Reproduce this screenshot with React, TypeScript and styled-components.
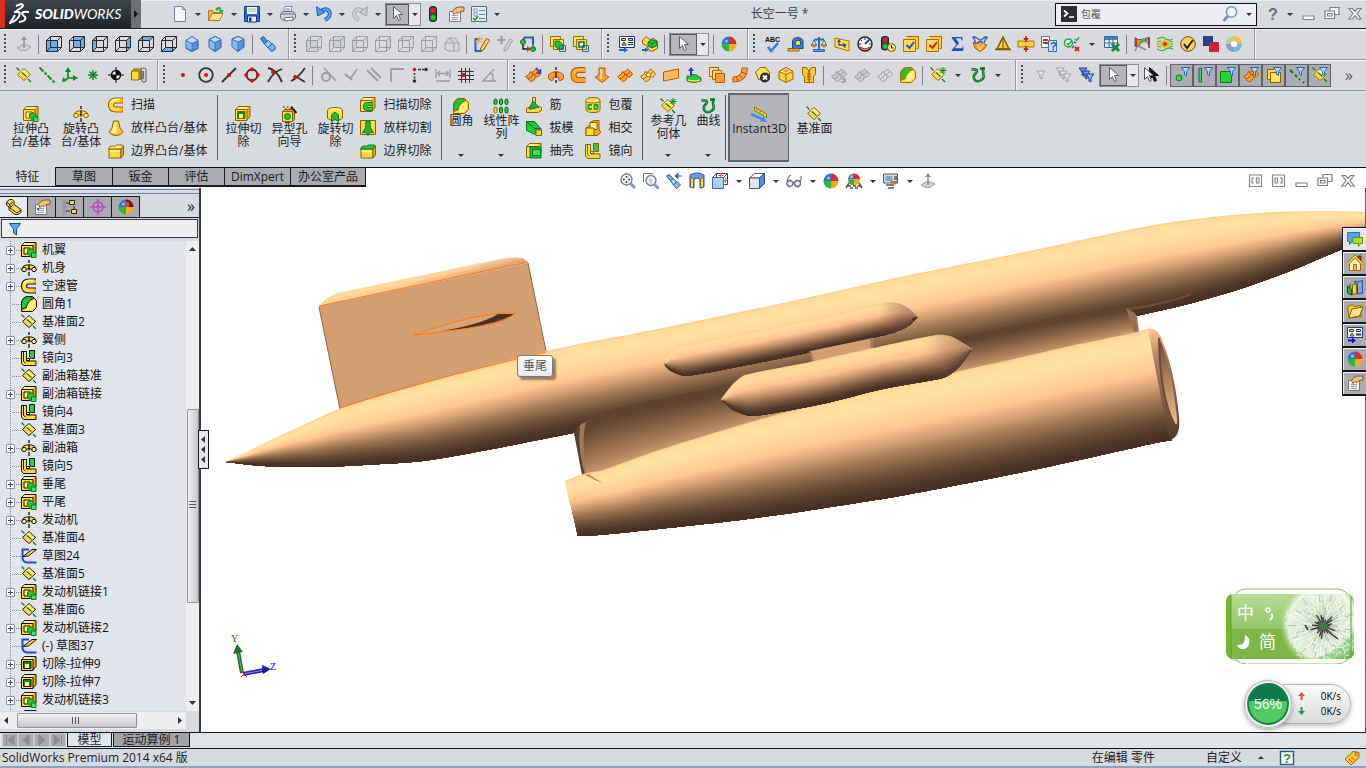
import React from 'react';
import styled, { createGlobalStyle } from 'styled-components';

/* ---------- drawing helpers ---------- */

type Shape = [d: string, fill: string, stroke?: string, width?: number];
type Label = { text: string; x: number; y: number; size: number; fill: string; serif?: boolean };
type Part = Shape | Label;

const circle = (x: number, y: number, r: number) =>
  `M${x - r} ${y}a${r} ${r} 0 1 0 ${2 * r} 0a${r} ${r} 0 1 0 ${-2 * r} 0`;
const box = (x: number, y: number, w: number, h: number) => `M${x} ${y}h${w}v${h}h${-w}z`;

const N = 'none';
const C = 'currentColor';
const YEL = '#ffdc3c';
const LITE = '#fff08a';
const GOLD = '#e8ae10';
const GREEN = '#1fc437';
const DARKGREEN = '#0b7a1c';
const ORANGE = '#ff9f2e';
const RUST = '#b35900';
const BLUE = '#2163c4';
const GREY = '#9a9ca0';

const cubeWire = (stroke: string): Part[] => [
  [box(0.5, 4.5, 11, 11), N, stroke],
  ['M0.5 4.5l4-4h11v11l-4 4M4.5 .5v11h11M0.5 15.5l4-4M11.5 4.5l4-4', N, stroke],
];
const faces: Record<string, string> = {
  front: 'M0 4h12v12h-12z',
  back: 'M4 0h12v12h-12z',
  left: 'M.5 4.5l4-4v11l-4 4z',
  right: 'M11.5 4.5l4-4v11l-4 4z',
  top: 'M.5 4.5l4-4h11l-4 4z',
  bottom: 'M.5 15.5l4-4h11l-4 4z',
};
const cube = (face: string): Part[] => [[faces[face], '#6eaeea'], ...cubeWire('#26282c')];
const greyCube = (face: string): Part[] => [[faces[face], '#cccfd3'], ...cubeWire(GREY)];
const isoCube = (t: number): Part[] => [
  [`M8 .5l6 ${t}v8l-6 ${15 - t - 8}l-6-${15 - t - 8}v-8z`, '#5b93da', '#2c5ca6'],
  [`M8 .5l6 ${t}l-6 3l-6-3z`, '#c2defa', '#3c6cb6'],
  [`M8 ${t + 3.5}v${11.5 - t}`, N, '#3c6cb6'],
  [`M2.5 ${t + 1.5}l5 2.5v${10 - t}l-5-2.5z`, '#86b7ee'],
];
const funnelAt = (x: number, y: number, fill: string, stroke: string): Part[] => [
  [`M${x} ${y}h8l-3 4v4l-2-1v-3z`, fill, stroke],
];
const smallFunnel = funnelAt(7.5, 0.5, '#b8dcfb', BLUE);
const planeOf = (edge: string): Part[] => [
  ['M8 1.500l6.500 6l-6.500 6l-6.500-6z', YEL, edge],
  ['M8 2.500l5 5l-2 2l-6-5z', LITE],
  ['M6 5.500l4.500 4', N, DARKGREEN, 1.200],
  ['M.5 .5l3 3M12 12l3 3', N, DARKGREEN, 1.300],
];
const plane = planeOf(C);
const pencil: Part[] = [
  ['M5.5 12l6-9.5l2.5 1.5l-6 9.5l-2.5 1z', '#ffd24a', '#8a5a10'],
  ['M11.5 2.5l2.5 1.5', N, '#c33', 2],
];
const ball = (r: number, y = 8): Part[] => [
  [`M8 ${y}L8 ${y - r}A${r} ${r} 0 0 0 ${8 - r} ${y}z`, '#2c74e0'],
  [`M8 ${y}L8 ${y - r}A${r} ${r} 0 0 1 ${8 + r} ${y}z`, '#dd2c22'],
  [`M8 ${y}L8 ${y + r}A${r} ${r} 0 0 0 ${8 + r} ${y}z`, '#f0ae28'],
  [`M8 ${y}L8 ${y + r}A${r} ${r} 0 0 1 ${8 - r} ${y}z`, '#2fb43c'],
  [circle(5.5, y - 3, 1.6), 'rgba(255,255,255,.55)'],
];
const arrowCursor = (dx: number, fill: string, stroke: string): Part[] => [
  [`M${3.5 + dx} .5v12l3-3l2 5l2-1l-2-5h4z`, fill, stroke],
];
const block: Part[] = [
  ['M.5 3.5l3-3h11.5v10l-3 3.5h-11.5z', GOLD, C],
  [box(0.5, 3.5, 11.5, 11), YEL, C],
  ['M1.500 3l2-2h10l-2 2z', LITE],
];
const openBlock: Part[] = [
  ['M1 6h12v9h-12z', YEL, C],
  ['M2 7h10v2h-10z', LITE],
  ['M13 6l2.5-3v9l-2.5 3z', GOLD, C],
];
const tube = (fill: string, stroke: string): Part[] => [
  ['M14.5 3h-7q-5 0-5 5t5 5h7', N, stroke, 6],
  ['M14 3h-6.500q-5 0-5 5t5 5h6.500', N, fill, 4],
  ['M13 2.500h-6q-4 1-4 4', N, '#ffe0a0', 1],
];
const check = (stroke: string): Part[] => [
  ['M3.500 .5h12v12h-2', '#ffc93c', '#a86e00'],
  [box(0.5, 3.5, 12, 12), '#ffd75a', '#a86e00'],
  ['M3.5 9l3 3l4.500-6', N, stroke, 2],
];
const sheetHand: Part[] = [
  [box(1.5, 5.5, 11, 10), '#f6f6f6', '#777'],
  ['M4 9.500h6M4 11.500h6M4 13.500h6', N, '#99a'],
  ['M4.500 5.500q2-4 6-4.500l5.500 0v4l-4 .500l-2 2l-2-1l-2 2z', '#f2be82', '#8a5522'],
];
const quilt = (fill: string, edge: string): Part[] => [
  ['M.500 9.500q4-1 5-5q2 2 5-2.500l5 4.500q-2 5-5 3q-1 5-5 5z', fill, edge],
  ['M3 12q4-1 5-5q2 2 5-2.500M5.500 4.500l5 5', N, edge],
];

const icons: Record<string, Part[]> = {
  newFile: [
    ['M2.5 .5h8l3 3v12h-11z', '#f2f8fc', '#6d8799'],
    ['M10.5 .5v3h3', '#cfe0ec', '#6d8799'],
  ],
  open: [
    ['M.5 4.5h4l1 2h6v8h-11z', '#f0b93a', '#b37a10'],
    ['M.5 14.5l3.500-7h11l-3.500 7z', '#ffe68c', '#b37a10'],
    ['M8 4q2-3 5-1', N, '#2fa83a', 2.500],
    ['M10.500 4h5.500l-2.500 4z', '#2fa83a'],
  ],
  save: [
    [box(0.5, 0.5, 15, 15), '#2c66d0', '#12398c'],
    [box(3, 1, 10, 7), '#fff'],
    ['M4 3h8M4 5h8', N, '#9ab'],
    [box(3.5, 10, 9, 6), '#e6ebf2', '#12398c'],
    [box(5, 11.500, 2.500, 4), '#12398c'],
  ],
  print: [
    ['M3 7l2-6.500h7l-1.500 6z', '#fff', '#889'],
    ['M5.500 3h4.500M5 5h4.500', N, '#58b'],
    ['M.5 8l3-2.500h9l3 2.500v4l-3 2.500h-9l-3-2.500z', '#cfd4dc', '#6b7280'],
    ['M1 8h14M4 12l9-1v3l-8 1z', '#fff', '#6b7280'],
  ],
  undo: [
    ['M4 6q5-5 9-1q3 5-4 9', N, '#1c5fb8', 4],
    ['M4 6q5-5 9-1q3 5-4 9', N, '#5da7f0', 2],
    ['M.5 .5l1 9.500l7-3.500z', '#4c99ea', '#1c5fb8'],
  ],
  redo: [
    ['M12 6q-5-5-9-1q-3 5 4 9', N, '#a3a6ab', 4],
    ['M12 6q-5-5-9-1q-3 5 4 9', N, '#d0d3d7', 2],
    ['M15.500 .5l-1 9.500l-7-3.500z', '#c8cbcf', '#a3a6ab'],
  ],
  select: arrowCursor(0, '#fff', '#5a5c60'),
  traffic: [
    ['M4.500 2.500q0-2 3.500-2t3.500 2v11q0 2-3.500 2t-3.500-2z', '#444', '#222'],
    [circle(8, 4.5, 2.500), '#e8231a'],
    [circle(8, 11.5, 2.500), '#1fd02e'],
  ],
  properties: sheetHand,
  options: [
    [box(0.5, 0.5, 15, 15), '#e3edf4', '#4e6a86'],
    [box(3, 3, 3, 3), '#fff', '#8098b0'],
    ['M8 4.500h6M8 8.500h6M8 12.500h6', N, '#6e86a0', 1],
    [box(3, 7, 3, 3), '#fff', '#8098b0'],
    ['M2 12l2 2l3-4', N, '#1a9a28', 1.500],
  ],
  normalTo: [
    ['M1 12l5-3h5l4 2l-5 3.500h-5z', '#cfd1d5', '#a0a2a6'],
    ['M8 12v-9', N, '#8a8c90', 1.500],
    ['M5 4l3-4l3 4z', '#8a8c90'],
  ],
  front: cube('front'),
  back: cube('back'),
  left: cube('left'),
  right: cube('right'),
  top: cube('top'),
  bottom: cube('bottom'),
  isometric: isoCube(4),
  trimetric: isoCube(3),
  dimetric: isoCube(2.500),
  telescope: [
    ['M.500 2.500l3-2l4 5l-3 2.500z', '#3e8be0', '#1b55a5'],
    ['M4.500 7.500l4-3l3.500 4l-4 3.500z', '#a4d0f6', '#1b55a5'],
    ['M8 11.500l4.500-4l3 4q0 3-4 4z', '#7ab8f2', '#1b55a5'],
  ],
  gFront: greyCube('front'),
  gBack: greyCube('back'),
  gLeft: greyCube('left'),
  gRight: greyCube('right'),
  gTop: greyCube('top'),
  gBottom: greyCube('bottom'),
  gIso: [
    ['M1 7l4-5h6l4 5v8h-10l-4-2z', '#d4d6da', GREY],
    ['M1 7h9l5 0M10 7v8M5 2l5 5', N, GREY],
  ],
  sketch: [
    ['M1.500 15v-12h4M1 15h7', N, BLUE, 2],
    ['M1 5.500l8-3M5 .5v7M2 1.500l6 5M8 1.500l-6 5', N, '#f5a030', 1],
    ['M6.500 12.500l6-10l3 1.500l-6 10l-3 1z', '#ffd24a', '#8a5a10'],
  ],
  sketch3d: [
    ['M4.500 0v8M.5 4h8', N, GREY, 2],
    ['M7 13l6-10l2.500 1.500l-6 10l-2.500 .5z', '#d2d4d8', GREY],
  ],
  sketchStep: [
    ['M4 1.500h9v8M4 1.500v3', N, BLUE, 2],
    [circle(3, 6, 2.500), GREEN, DARKGREEN],
    ['M3 9v4h5', N, '#222', 1.500],
    ['M7 10l4 3l-4 3z', '#e0261c'],
    [circle(13, 13, 2.500), GREEN, DARKGREEN],
  ],
  copyBody: [
    [box(0.5, 0.5, 10, 10), '#ffe15a', '#967000'],
    [box(3.5, 3.5, 10, 10), '#ffd94a', '#967000'],
    ['M5 5l4 0l4 4v4h-5l-3-3z', GREEN, DARKGREEN],
    [box(9.5, 9.5, 6, 6), N, BLUE],
  ],
  copySketch: [
    [box(0.5, 0.5, 10, 10), '#ffe15a', '#967000'],
    [box(3.5, 3.5, 10, 10), '#ffd94a', '#967000'],
    [box(6, 6, 5, 5), '#fff', DARKGREEN, 1.500],
    [box(9.5, 9.5, 6, 6), N, BLUE],
  ],
  blocks: [
    [box(0.5, 0.5, 15, 11), '#f4f6fa', '#1c3c8c'],
    [box(2.5, 2.5, 4, 2), YEL, '#334'],
    [box(9.5, 2.5, 4, 2), '#bcd', '#334'],
    ['M3 9l2-3l2 3z', YEL, '#334'],
    ['M9 6.500h5M9 8.500h5', N, '#334'],
    ['M0 14h6', N, BLUE, 2],
    ['M5 11.500l4 2.500l-4 2.500z', BLUE],
  ],
  blockYellow: [
    ['M.500 4l4-3.500l3 3l4-1l4 3v7l-6 3l-3-2l-2-4l-4-2z', YEL, '#8a6000'],
    ['M6 6l4-2.500l5 2v4l-5 2.500l-4-2z', GREEN, DARKGREEN],
    ['M6 6l4 2v4M10 8l5-3', N, DARKGREEN],
    ['M0 14h4', N, BLUE, 2],
    ['M3 11.500l4 2.500l-4 2z', BLUE],
  ],
  appearance: ball(7.500),
  spell: [
    { text: 'ABC', x: 0, y: 6, size: 7, fill: '#111' },
    ['M3 11l3 4l7-8', N, '#3b78d8', 2.500],
  ],
  measure: [
    ['M4.500 4.500q1-3 5-3t5.500 3v8h-10.500z', '#3a7bd4', '#173f86'],
    [circle(10, 7, 2.800), '#ffe05a', '#173f86'],
    ['M0 12.500h11v2.500h-11z', '#ffd42a', '#8a6000'],
    ['M2 12v2M5 12v2M8 12v2', N, '#8a6000'],
  ],
  mass: [
    ['M8 1v13M3 3.500h10', N, '#2b69b6', 2],
    ['M.5 9l2.500-5l2.500 5zM10.500 9l2.500-5l2.500 5z', '#fff2b0', '#2b69b6'],
    ['M0 9h6q-3 4-6 0zM10 9h6q-3 4-6 0z', '#ffc21a', '#a06c00'],
    [box(2.5, 13.5, 11, 2), '#5c9be6', '#2b69b6'],
  ],
  section: [
    ['M1 2l14 3v10l-14-4z', '#ffdc50', '#a87800'],
    ['M5 5v4h6v3', N, '#1d4fb5', 1.300],
    ['M3 6l2-3l2 3zM9 7l4 2l-4 2z', '#1d4fb5'],
  ],
  gauge: [
    [circle(8, 8, 7), '#f6f6f6', '#26282c', 1.500],
    ['M8 8l5-5', N, '#1d4fb5', 2],
    ['M8 2v2M2 8h2M12 8h2M4 4l1 1', N, '#26282c'],
    ['M3 11q5 4 10 0', N, '#e03020', 1.500],
  ],
  trafficClock: [
    ['M1.500 2q0-1.500 3.500-1.500t3.500 1.500v10q0 2-3.500 2t-3.500-2z', '#444', '#222'],
    [circle(5, 4, 2.300), '#e8231a'],
    [circle(5, 10.5, 2.300), '#1fd02e'],
    [circle(11.500, 11.500, 4), '#ffe67a', '#7a5a00'],
    ['M11.500 9v3h2', N, '#222'],
  ],
  checkBlue: check('#1d4fd0'),
  checkRed: check('#d42014'),
  sigma: [{ text: 'Σ', x: 2, y: 15, size: 20, fill: '#1d55b0', serif: true }],
  deviation: [
    ['M1 6l4 2l3-2l4 2l3 1l-3 4l-4 2.500l-5-3.500z', ORANGE, RUST],
    ['M5 8l3 6M12 8l-4 6', N, '#ffe0a0'],
    ['M4 8l-2-6M5 7l8-6M12 7l2-5M11 6l-8-5', N, BLUE, 1.300],
    ['M0 3l1-3l4 1zM16 3l-1-3l-4 1z', BLUE],
  ],
  warn: [
    ['M8 1l6 12h-12z', '#ffce2e', '#7d5600', 1.500],
    ['M8 3v10', N, '#7d5600', 1],
    ['M0 13.500h16', N, '#7d5600', 1.500],
  ],
  thickness: [
    ['M0 5h5q3 2 6 0h5v6h-5q-3-2-6 0h-5z', '#ffcf3a', '#a87800'],
    ['M5 2h6l-3 4zM5 14h6l-3-4z', '#c92017'],
    ['M8 0v3M8 13v3', N, '#c92017', 1.500],
  ],
  compareDocs: [
    [box(0.5, 0.5, 8, 11), '#fff', '#5c7690'],
    ['M2 4h5M2 7h5', N, '#d42014', 2],
    [box(7.5, 4.5, 8, 11), '#cfe1f5', '#3f6ca6'],
    { text: '?', x: 9, y: 14, size: 11, fill: '#1d55b0' },
  ],
  verify: [
    [circle(4.500, 7, 4), '#e9f8ea', '#2fa83a', 1.500],
    ['M3 7l1.500 2l3-4M11 3l1.500 1.500l2.500-3', N, '#2fa83a', 1.500],
    ['M11 11l4 4M15 11l-4 4', N, '#e0261c', 2],
    ['M8 12l2-2M10 6l2 1', N, BLUE, 1.500],
  ],
  spreadsheet: [
    [box(0.5, 0.5, 13, 11), '#eef4fb', '#3a66a0'],
    [box(1, 1, 12, 3), '#4a80c4'],
    ['M1 7h12M5 1v10M9 1v10', N, '#3a66a0'],
    ['M8 8l7 7M15 8l-7 7', N, '#1c8a3a', 3],
  ],
  simulation: [
    ['M1 1.500q3 3 6 2t8-2v7l-3-3q-3-2-5 1l-2 4h-4z', '#e8c22e', '#58606a'],
    ['M2 3v7', N, '#e0261c', 2],
    ['M4.500 4v6', N, '#f08a1c', 2.500],
    ['M8 4v3', N, '#3cb83c', 3],
    ['M12 3v2', N, '#2c74e0', 2.500],
    ['M4 9l-3 6M4 10l8 4', N, '#888', 1.500],
    ['M15 1v11', N, '#b02010', 1.500],
  ],
  flow: [
    ['M0 3q5-3 8-.5t8 .5M0 6q3-1 4-1M16 6q-3-1-4-1M0 13q5 3 8 .5t8-.5M0 10q3 1 4 1M16 10q-3 1-4 1M0 8h3M13 8h3', N, '#38b438', 1.200],
    ['M3 8q5-7 10 0q-5 7-10 0z', N, '#e8d020', 1.300],
    ['M5 8q3-4 6 0q-3 4-6 0z', N, '#f08a20', 1.300],
    [circle(8, 8, 1.800), '#e0261c'],
  ],
  designCheck: [
    [circle(8, 8, 7.300), '#ffd25a', '#6c4c00'],
    ['M4 8l3 4l6-8', N, '#222', 2],
  ],
  redBlue: [
    [box(0, 0, 10, 10), '#22428c'],
    [box(6, 6, 10, 10), '#c82436'],
  ],
  ring: [
    ['M8 2.500A5.500 5.500 0 0 1 13.500 8', N, '#f0c040', 5],
    ['M13.500 8A5.500 5.500 0 0 1 8 13.500', N, '#74b8e8', 5],
    ['M8 13.500A5.500 5.500 0 0 1 2.500 8', N, '#8f98c0', 5],
    ['M2.500 8A5.500 5.500 0 0 1 8 2.500', N, '#b8d090', 5],
    [circle(8, 8, 3), '#fff'],
  ],
  plane,
  axis: [
    ['M.5 .5l4 4M5.500 5.500l2 2M8.500 8.500l4 4M13.500 13.500l2 2', N, '#118a22', 2],
  ],
  coords: [
    ['M6 2v9h8M6 11l-4 3', N, '#118a22', 1.700],
    ['M3 5l3-5l3 5zM11 8l5 3l-5 3zM0 15l1-5l4 4z', '#118a22'],
  ],
  point: [['M8 3v10M3 8h10M4.500 4.500l7 7M11.500 4.500l-7 7', N, '#118a22', 1.500]],
  centerMass: [
    [circle(8, 8, 4.500), '#fff', '#111', 1.500],
    ['M8 8v-5a5 5 0 0 1 5 5zM8 8v5a5 5 0 0 1-5-5z', '#111'],
    ['M8 0v16M0 8h16', N, '#111', 1],
  ],
  attach: [
    ['M1 4l2-2h7v9l-2 2', '#e0a800', '#8a6000'],
    [box(0.500, 4, 7.500, 9), YEL, '#8a6000'],
    ['M10 13v-10q0-2 2.500-2t2.500 2v10q0 2-2 2t-2-2v-9M12.500 4v8', N, '#6a6c70', 1.200],
  ],
  dot: [[circle(8, 8, 2), '#e01010']],
  snapCenter: [
    [circle(8, 8, 6.800), N, '#333', 1.800],
    [circle(8, 8, 2), '#e01010'],
  ],
  snapMid: [
    ['M1 15l14-14', N, '#333', 1.800],
    [circle(8, 8, 2), '#e01010'],
  ],
  snapQuad: [
    [circle(8, 8, 5.500), N, '#333', 1.800],
    [circle(8, 2.200, 2) + circle(8, 13.800, 2) + circle(2.200, 8, 2) + circle(13.800, 8, 2), '#e01010'],
  ],
  snapCross: [
    ['M1 1q8 1 14 14M15 2q-9 3-14 13', N, '#333', 1.800],
    [circle(6, 5, 2), '#e01010'],
  ],
  snapNear: [
    ['M1 14q7-3 14-13M5 9l10 6', N, '#333', 1.800],
    [circle(5, 10, 2), '#e01010'],
  ],
  snapTangent: [
    [circle(6, 10, 4), N, GREY, 1.800],
    ['M4 1l12 13', N, GREY, 1.800],
  ],
  snapPerp: [['M2 7l7 6M14 2l-6 9', N, GREY, 1.800]],
  snapParallel: [['M1 3l11 11M5 1l10 10', N, GREY, 1.800]],
  snapHV: [['M2 15v-13h13', N, GREY, 1.800]],
  snapPoints: [
    [circle(2.500, 2.500, 1.800), '#e01010'],
    ['M6 2.500h3M10 2.500h2M2.500 6v2M2.500 9.500v2', N, '#333', 1.500],
    [circle(14, 2.500, 1.800) + circle(2.500, 14, 1.800), '#333'],
  ],
  snapLength: [['M1 2v9M15 2v9M2 6.500h12M5 4l-2.500 2.500l2.500 2.500M11 4l2.500 2.500l-2.500 2.500M1 14h14', N, GREY, 1.300]],
  snapGrid: [
    ['M0 4.500h16M0 8.500h16M0 12.500h16M3.500 1v15M7.500 1v15M11.500 1v15', N, '#333', 1],
    [circle(5.500, 8, 2.200), '#e01010'],
  ],
  snapAngle: [['M13 2l-11 12h13M10 6q3 3 2 8', N, GREY, 1.500]],
  surfExtrude: [
    ...quilt(ORANGE, RUST),
    ['M11 1l4 4M15.500 2v4h-4', N, '#1d3fd0', 1.500],
  ],
  surfRevolve: [
    ['M.500 12v-4q7.500-7 15 0v4l-4 2q-1-5-3.500-5t-4 5z', ORANGE, RUST],
    ['M8 0v3M8 5v6M8 13v3', N, '#111', 1.300],
  ],
  surfSweep: tube(ORANGE, RUST),
  surfLoft: [
    ['M5 1h6l0 7l4 2l-7 5.500l-7-5.500l4-2z', ORANGE, RUST],
    ['M7 2v10', N, '#ffd8a0', 2],
  ],
  surfBoundary: quilt(ORANGE, RUST),
  surfFill: [...quilt('#ffd24a', '#a06400'), ['M5.500 8l3-2.500l3 2l-3 2.500z', '#fff2b0', '#a06400']],
  surfPlanar: [['M.5 5l15-3v9l-15 3z', '#ffb960', RUST]],
  surfOffset: [
    ['M1 9q3 1 5-1t9 3v3q-7 3-14 0z', '#28c83c', DARKGREEN],
    ['M2 13q6 2 12 0', N, YEL, 1.500],
    ['M5 8v-5', N, '#1d3fd0', 2],
    ['M2 4l3-4l3 4z', '#1d3fd0'],
  ],
  surfRuled: [
    [box(0.5, 0.5, 9, 9), '#ffe08a', RUST],
    [box(3.5, 3.5, 9, 9), '#ffd878', RUST],
    [box(6.5, 6.5, 9, 9), ORANGE, RUST],
  ],
  surfRadiate: [
    ['M10 1h5.500q0 14-14.500 14v-5q9 0 9-9z', ORANGE, RUST],
    ['M9 5l6 2M7 8l5 4M4 9l2 5', N, RUST],
  ],
  deleteFace: [
    ['M.500 5l5-4.500h5l4 5v5l-5 3l-6-1z', '#ffe14a', '#8a6000'],
    [circle(10, 10.500, 5), '#2a2c30'],
    ['M8 8.500l4 4M12 8.500l-4 4', N, '#fff', 1.800],
  ],
  replaceFace: [
    ['M1 4.500l7-4l7 4v7.500l-7 3.500l-7-3.500z', '#ffd23a', '#a06400'],
    ['M1 4.500l7 3l7-3l-7-4z', '#ffe88a', '#a06400'],
    ['M5 4l3-2l3 2l-3 2z', ORANGE],
    ['M8 7v8', N, '#a06400'],
  ],
  knit: [
    ['M1.500 .500h4l2.500 4l2.500-4h4v7l-2 2v6h-9v-6l-2-2z', '#ffc63a', '#a06400'],
    ['M8 4v12', N, '#a06400', 1.500],
    ['M6 7h4M6 9.500h4M6 12h4', N, '#a06400'],
  ],
  gExtend: [...quilt('#c9cbcf', GREY), ['M10 10l4 4M14 11v4h-4', N, GREY, 1.500]],
  gTrim: quilt('#c9cbcf', GREY),
  gUntrim: quilt('#d8dade', GREY),
  fillet: [
    ['M.500 6q2-5.500 7-5.500h4l4 4v7l-4 4h-11z', YEL, C],
    ['M.500 7.500q1-7 7-7q3 0 5 2q-6 2-7 9l-5 2z', GREEN, C],
    ['M5.500 14q0-8 8-9v6l-3 3z', LITE],
  ],
  refGeom: [...planeOf('#a06c00'), ['M13 0v7M9.500 3.500h7M10.500 1l5 5M15.500 1l-5 5', N, '#118a22', 1]],
  curve: [
    ['M1.500 2.500h4q3 1 0 4t-1 6t6 1t3-6t0-5.500', N, '#0b6a24', 2.500],
    ['M10 1.500h5', N, '#0b6a24', 2.500],
    ['M1.500 2.500h4q3 1 0 4t-1 6t6 1t3-6t0-5.500', N, '#2fae4c', 1],
  ],
  gFilter: funnelAt(4, 4, '#e4e6ea', GREY),
  gFilters: [...funnelAt(0, 1, '#e4e6ea', GREY), ...funnelAt(3, 4, '#e4e6ea', GREY), ...funnelAt(7, 7, '#e4e6ea', GREY)],
  filters: [...funnelAt(0, 1, '#5ea2ee', '#123a8c'), ...funnelAt(3, 4, '#5ea2ee', '#123a8c'), ...funnelAt(7, 7, '#8cc4f8', '#123a8c')],
  cursors: [...arrowCursor(2, '#111', '#111'), ...arrowCursor(-3, '#fff', '#555')],
  fVertex: [[circle(5, 11, 3), '#3ad850', DARKGREEN], ...smallFunnel],
  fEdge: [[box(2, 1, 2.500, 14), '#3ad850', DARKGREEN], ...smallFunnel],
  fFace: [[box(0.5, 4.5, 11, 11), '#1fd837', DARKGREEN], ...smallFunnel],
  fSurface: [...quilt(ORANGE, RUST), ...smallFunnel],
  fSolid: [[box(1.5, 2.5, 10, 10), YEL, '#8a6000'], [box(4.5, 5.5, 10, 10), '#ffe15a', '#8a6000'], ...smallFunnel],
  fAxis: [['M1 3l3 3M6 8l2 2M10 12l1 1M14 15l1 1', N, '#0b6a1c', 2], ...smallFunnel],
  fPlane: [...planeOf('#a06c00'), ...smallFunnel],
  boss: [
    ...block,
    [box(3, 6, 6, 6), LITE, C],
    ['M6.500 8l3.500-1.500l4.500 4v4.500h-4.500l-3.500-4z', '#2cc040', DARKGREEN],
    [box(10.500, 11, 4.500, 4.500), '#4ce060', DARKGREEN],
  ],
  revolve: [
    ['M1 9q1-4 4.500-4h5q3.500 0 4.500 4v1.500h-3.500q-1-2-3.500-2t-3.500 2h-3.500z', YEL, C],
    [circle(3, 9.500, 2.200) + circle(13, 9.500, 2.200), LITE, C],
    ['M8 0v3M8 4.500v6M8 12v4', N, '#111', 1.300],
  ],
  sweep: [
    ['M15 3.500h-7q-5 0-5 4.500t5 4.500h7', N, C, 6],
    ['M14.300 3.500h-6.300q-5 0-5 4.500t5 4.500h6.300', N, YEL, 4],
    ['M13 2.500h-5q-4 0-5.500 3.500', N, '#fff8c8', 1.300],
    [circle(13.500, 3.500, 1.800) + circle(13.500, 12.500, 1.800), '#f5b818'],
  ],
  loft: [
    ['M5.500 1h5l1.500 7l3 4q-2 3.500-7 3.500t-7-3.500l3-4z', '#f8c83a', C],
    ['M6.500 2h2l0 11h-5z', LITE],
  ],
  boundary: [
    ...openBlock,
    ['M.5 6q2-4 4-3t4-1h6l1 1l-3 3z', LITE, C],
  ],
  cutExtrude: [
    ...block,
    [box(2.5, 5.5, 7.500, 7), '#138a28', C],
    [box(4, 8, 4, 4), LITE],
  ],
  hole: [
    ['M1.500 5.500l2-2h10v10l-2 2', GOLD, C],
    [box(1.5, 5.5, 10, 10), YEL, C],
    [circle(6.500, 10.500, 3), GREEN, DARKGREEN],
    ['M2 1h1.500M6 1h1.500M10 1h1.500M4 3h1.500M8 3h1.500', N, '#e0261c', 1.500],
    ['M10 1l5.500 6', N, '#222', 2],
  ],
  cutRevolve: [
    ['M.500 5q0-3.500 7.500-3.500t7.500 3.500v7q-1 2-4 2v-5l-3.500-2l-3.500 2v5q-3 0-4-2z', YEL, C],
    ['M2 4.500q6-3 12 0', N, LITE, 2],
    ['M4.500 15.500v-6.500l3.500-3l3.500 3v6.500l-3.500-2z', '#20b838', DARKGREEN],
  ],
  cutSweep: [
    ...block,
    ['M12.500 7h-4.500q-3 0-3 2.500t3 2.500h4.500', N, DARKGREEN, 4],
    ['M12 7h-4q-3 0-3 2.500t3 2.500h4', N, '#2cd048', 2],
  ],
  cutLoft: [
    [box(0.5, 0.5, 15, 14), YEL, C],
    ['M6 1q1 7-3.500 12l3-1l2.500 3.500l2.500-3.500l3 1q-4.500-5-3.500-12z', '#20b838', DARKGREEN],
  ],
  cutBoundary: [
    ...openBlock,
    ['M.5 6q2-4 4-3t4-1h6l1 1l-3 3z', '#20c83a', DARKGREEN],
  ],
  pattern: [
    ['M1 3q0-2 1.500-2t1.500 2v2q0 1.500-1.500 1.500t-1.500-1.500zM6.500 3q0-2 1.500-2t1.500 2v2q0 1.500-1.500 1.500t-1.500-1.500zM12 3q0-2 1.500-2t1.500 2v2q0 1.500-1.500 1.500t-1.500-1.500zM6.500 11q0-2 1.500-2t1.500 2v2.500q0 1.500-1.500 1.500t-1.500-1.500zM12 11q0-2 1.500-2t1.500 2v2.500q0 1.500-1.500 1.500t-1.500-1.500z', '#2cd048', '#0a5a18'],
    ['M1 11q0-2 1.500-2t1.500 2v2.500q0 1.500-1.500 1.500t-1.500-1.500z', YEL, C],
  ],
  rib: [
    ['M6.500 .500h3v8l6 2v3l-3 2h-12v-4l6-3z', YEL, C],
    ['M7 4q3 4 6 6l-7 2h-3z', '#20b838', DARKGREEN],
  ],
  draft: [
    ['M.500 1.500h8l7 8v2l-4 4l-11-5z', '#20c83a', DARKGREEN],
    ['M.500 1.500l8 7l3 7M8.500 8.500h6', N, DARKGREEN],
    [box(10, 10, 5.500, 5.500), YEL, C],
  ],
  shell: [
    ...block,
    [box(4, 4, 11, 11), '#20b838', DARKGREEN],
    [box(6.500, 6.500, 8, 6), '#3de055', DARKGREEN],
  ],
  wrap: [
    ['M1 3.500q0-3 7-3t7 3v9q0 3-7 3t-7-3z', YEL, C],
    ['M1 3.500q0 2.500 7 2.500t7-2.500', LITE, C],
    ['M7 8h-3.500v4h3.500M9.500 8h3v4h-3z', N, '#18a830', 2],
  ],
  intersect: [
    ['M1 8l4-3h1v-3l3-1.500h5v8l1.500 4l-3 3h-11.500z', '#f0a82a', C],
    [box(5, 2.500, 7, 7), LITE, C],
    [box(1, 8, 8, 7.500), YEL, C],
  ],
  mirror: [
    ['M.500 1.500h5v9h3v-2h-2l3 0M.500 1.500v11.500l2 2.500h12.500v-4.500h-9.500v-9.500z', YEL, C],
    ['M8.500 .500h5v8h-3l-2-1.500z', '#2ccc44', C],
    ['M2.500 2v9.500l2 1.500', N, C],
  ],
  instant3d: [
    ['M3.500 1l12 7v3.500l-12-7z', '#ffe15a', '#8a7000'],
    ['M6 3v2M9 5v2M12 7v2', N, '#8a7000'],
    ['M0 8l11 5', N, '#3b8ee6', 2.500],
    ['M9 15.500l7 .500l-4-6z', '#3b8ee6'],
  ],
  zoomFit: [
    [circle(6.500, 6.500, 5.500), '#f2f5f8', '#777c84', 1.300],
    ['M6.500 3v7M3 6.500h7', N, '#333', 1.500],
    [box(4.800, 4.800, 3.400, 3.400), '#f2f5f8'],
    ['M10.500 10.500l4.500 4.500', N, '#7a9ace', 3],
  ],
  zoomArea: [
    ['M.5 9v-8.500h10', N, '#777', 1],
    [circle(8, 7.500, 5), '#f2f5f8', '#777c84', 1.300],
    ['M6 8l2-2v5', N, '#aab', 1],
    ['M11.500 11.500l4 4', N, '#7a9ace', 3],
  ],
  prevView: [
    ['M.500 3l3-1.500l3.500 4l-2.500 2z', '#7ab4ee', '#2b5a9a'],
    ['M4.500 8l3-2.500l3 3.500l-3 3z', '#b8daf8', '#2b5a9a'],
    ['M7.500 12l3.500-3.500l3.500 3.500l-4 3.500z', '#8cc0f4', '#2b5a9a'],
    ['M10 3h6M12 .5l-3 2.500l3 2.500z', BLUE, BLUE],
  ],
  sectionView: [
    ['M1 2q7-4 14 0v12l-4 1v-9q-3-2-6 0v9l-4-1z', '#6a9ce0', '#24508f'],
    ['M1.500 4l3 2v9l-3-1zM11.500 6l3-2v10l-3 1z', '#ffd84a', '#6a6040'],
  ],
  viewOrient: [
    ['M4.500 .5h11v11h-4v-7h-7z', '#fff', '#444'],
    ['M9 0v4M6.500 2.500h5M13.500 5v5M12 7.500h3', N, '#e05050'],
    ['M11.500 4.500l4-4M.5 4.500l4-4', N, '#444'],
    [box(0.5, 4.5, 11, 11), '#a8d0f2', '#3a6aa8'],
  ],
  displayStyle: [
    ['M.5 5l5-4.500h10l-5 4.500z', '#fff', '#555'],
    ['M10.500 5l5-4.500v10l-5 5z', '#4f8be0', '#2a4f90'],
    [box(0.5, 5, 10, 10.500), '#dde9fa', '#555'],
  ],
  glasses: [
    [circle(4, 10.500, 3) + circle(11.500, 10.500, 3), '#e4eefa', '#666b74', 1.300],
    ['M7 10q1-1 2 0M1 9q1-6 4-7M14 9q2-3 1-6', N, '#666b74', 1.200],
  ],
  scene: [...ball(6, 6.500), ['M0 15l3-5M16 15l-3-5M2 13h3M7 13h3M11 13h3M4 15h3M9 15h3', N, '#555', 1.600]],
  viewSettings: [
    [box(0.5, 1, 14, 9), '#d8dde4', '#555'],
    [box(2.500, 3, 7, 5), '#8aa2c0'],
    ['M11 4h3M11 6h3M3 12h8M5 15h6', N, '#555', 1.300],
    ['M7 8l8 0l-3 4z', '#b07040'],
  ],
  treeTab: [
    ['M.500 3l3-2.500h3l1.500 2v3l7 5v3l-3 2h-3l-6-4.500v-3l-2.500-2z', YEL, '#222'],
    ['M1 3.500l3 2.500v3l7 5M4 5.500l3-2.500M4 8.500l3-2.500M11 14l4-3', N, '#222', 1],
  ],
  propTab: [
    ...sheetHand,
    [box(3, 9, 2, 2), BLUE],
  ],
  configTab: [
    ['M1 0v16M3 0v16', N, '#8a8c90'],
    ['M4 4h3M4 12h4M12 7v4', N, '#222'],
    [box(7.5, 1.5, 5, 4), YEL, '#222'],
    [box(9.5, 10.5, 5, 4), YEL, '#222'],
  ],
  dimTab: [
    [circle(8, 8, 5), N, '#b548c8', 1.500],
    ['M8 0v16M0 8h16', N, '#b548c8', 1.500],
  ],
  displayTab: [
    ...ball(7.500),
    ['M8 .500a7.500 7.500 0 0 1 7.500 7.500h-4q-4-2-3.500-7.500z', '#6a1418'],
    [circle(9, 5, 2.500), '#d84038'],
  ],
  funnel: [['M2.500 2.500h11l-4 5.500v6l-3-2v-4z', '#58a8f0', '#1450a8']],
  sketchTree: [
    ['M8 1.500h-6.500v9q1 4 5 4h9', N, '#2348d8', 2],
    ['M2 8.500l9-7l4.500 0l-8 6.500z', '#ffc840', '#111'],
  ],
  forum: [
    ['M.5 1.500h12v9h-7l-3 3v-3h-2z', '#5aa4e4', '#2f74b8'],
    ['M6 6.500h9.500v6h-2l-2 3v-3h-5.500z', '#a6e020', '#5c9a08'],
  ],
  home: [
    [box(11, 1, 3, 6), '#c83020', '#701410'],
    ['M2.500 8l5.500-5.500l5.500 5.500v7.500h-11z', '#fff2c0', '#a06c00'],
    ['M.5 9l7.500-7.500l7.500 7.500', N, '#a06c00', 3],
    ['M.5 9l7.500-7.500l7.500 7.500', N, '#ffd23a', 1.500],
    [box(6.500, 9.500, 3, 6), '#ffc21a', '#a06c00'],
  ],
  library: [
    ['M.5 7l4 3v6l-4-2z', '#22b838', '#0b5a1c'],
    ['M5.500 6l4-1v9.500l-4 1z', '#ffd42a', '#8a6000'],
    ['M10.500 3l5-1.500v12.500l-5 1z', '#7aa8f0', '#24509c'],
    ['M3 9v-4M8 5v-3l2 1', N, '#0b5a1c'],
  ],
  folder: [
    ['M.5 3.500l5-2l1.500 2l7-1v11l-12 1.500z', '#f5c43c', '#8f6200'],
    ['M2 15l3-9l11-2l-3.500 9z', '#ffe68c', '#8f6200'],
  ],
  palette: [
    [box(0.5, 0.5, 15, 10), '#f4f6fa', '#1c3c8c'],
    [box(2.5, 2.5, 4, 2), YEL, '#334'],
    [box(9.5, 2.5, 4, 2), YEL, '#334'],
    ['M3 9l2-3l2 3z', YEL, '#334'],
    ['M9 7.500h5', N, '#334', 2],
    ['M1 13.500h5', N, '#1414c8', 2],
    ['M5 10.500l4 3l-4 3z', '#1414c8'],
  ],
  customProps: sheetHand,
  paneLeft: [
    [box(1.500, 2, 12, 11.500), '#fff', '#84868e', 1.200],
    ['M6 5h-2v5h2', N, '#84868e', 1.200],
    [box(8.500, 5, 2.500, 5), N, '#84868e', 1.200],
  ],
  paneRight: [
    [box(1.500, 2, 12, 11.500), '#fff', '#84868e', 1.200],
    ['M9 5h2v5h-2', N, '#84868e', 1.200],
    [box(4, 5, 2.500, 5), N, '#84868e', 1.200],
  ],
  minimize: [[box(2, 10, 11, 3.500), '#fff', '#7c7e88', 1.200]],
  restore: [
    [box(6, 1.5, 9, 7), '#fff', '#7c7e88', 1.200],
    [box(1, 5, 9.500, 7.500), '#fff', '#7c7e88', 1.200],
    [box(3.500, 7.500, 4.500, 2.500), '#fff', '#7c7e88', 1.200],
  ],
  close: [
    ['M2 2.500h3.500l2.500 3l2.500-3h3.500l-4 5l4 5.500h-3.500l-2.500-3.500l-2.500 3.500h-3.500l4-5.500z', '#fff', '#7c7e88', 1.200],
  ],
  magnifier: [
    ['M6.500 9.500l-5 5.500', N, '#7f93b0', 3],
    [circle(9.500, 6, 5.200), '#eaf5fc', '#7f93b0', 1.500],
  ],
  help: [{ text: '?', x: 4, y: 14, size: 16, fill: '#6c6e78' }],
  console: [
    [box(0, 0, 16, 16), '#2c2e32'],
    ['M3 4.500l3.500 3l-3.500 3M8 11h5', N, '#fff', 1.700],
  ],
  statusHelp: [
    [box(1.5, 1.5, 13, 13), '#fff', '#24608c', 1.500],
    { text: '?', x: 4, y: 13, size: 13, fill: '#18a028' },
  ],
  tag: [
    ['M1 9l8-7.500l6 1l0 5l-8 7.500z', '#ffc62e', '#a06400'],
    [circle(12, 4.500, 1.200), '#fff', '#a06400'],
    ['M5 9l3 3M7.500 7l3 3', N, '#a06400'],
  ],
  first: [['M4.500 3v10M12 3v10l-6-5z', '#8a8c90', '#8a8c90']],
  prev: [['M11 3v10l-6-5z', '#8a8c90', '#8a8c90']],
  next: [['M5 3v10l6-5z', '#8a8c90', '#8a8c90']],
  last: [['M11.500 3v10M4 3v10l6-5z', '#8a8c90', '#8a8c90']],
};

const Svg16 = styled.svg`
  display: block;
  flex: none;
  width: 16px;
  height: 16px;
  overflow: visible;
`;

const Icon = ({ name }: { name: string }) => (
  <Svg16 viewBox="0 0 16 16" aria-hidden="true">
    {icons[name].map((p, i) =>
      Array.isArray(p) ? (
        <path key={i} d={p[0]} fill={p[1]} stroke={p[2] ?? 'none'} strokeWidth={p[3] ?? 1} />
      ) : (
        <text
          key={i}
          x={p.x}
          y={p.y}
          fontSize={p.size}
          fill={p.fill}
          fontWeight="bold"
          fontFamily={p.serif ? 'Liberation Serif, serif' : 'Liberation Sans, sans-serif'}
        >
          {p.text}
        </text>
      ),
    )}
  </Svg16>
);

/* ---------- shared pieces ---------- */

const face = '#d7dadf';

const GlobalStyle = createGlobalStyle`
  * { box-sizing: border-box; }
  body {
    margin: 0;
    font: 12px/16px "Open Sans", "Noto Sans CJK SC", sans-serif;
    color: #1b1c1f;
    background: ${face};
  }
  button {
    margin: 0;
    padding: 0;
    border: 0;
    background: none;
    color: inherit;
    font: inherit;
  }
  ul { margin: 0; padding: 0; list-style: none; }
`;

const Page = styled.div`
  display: flex;
  flex-direction: column;
  min-height: 100vh;
  overflow: hidden;
`;

const Triangle = styled.span<{ $up?: boolean }>`
  display: block;
  border: 3px solid transparent;
  ${(p) => (p.$up ? 'border-bottom-color: #33353a; margin-top: -3px;' : 'border-top-color: #33353a; margin-top: 3px;')}
`;

const CaretButton = styled.button<{ $wide?: boolean }>`
  display: flex;
  flex: none;
  align-items: center;
  justify-content: center;
  width: ${(p) => (p.$wide ? 17 : 14)}px;
  height: 22px;
`;

const Caret = ({ wide }: { wide?: boolean }) => (
  <CaretButton $wide={wide} aria-label="展开">
    <Triangle />
  </CaretButton>
);

const ToolButton = styled.button<{ $pressed?: boolean; $w?: number }>`
  display: flex;
  flex: none;
  align-items: center;
  justify-content: center;
  width: ${(p) => p.$w ?? 23}px;
  height: 23px;
  color: #a06c00;
  ${(p) => p.$pressed && 'background: #abadb3; border: 1px solid #5f6166;'}
`;

const SplitSelect = styled.div<{ $narrow?: boolean }>`
  display: flex;
  flex: none;
  width: ${(p) => (p.$narrow ? 36 : 40)}px;
  height: 23px;
  margin: 0 ${(p) => (p.$narrow ? 0 : 1)}px;
  border: 1px solid #8d8f94;
`;

const SplitMain = styled.button`
  display: flex;
  flex: 1;
  align-items: center;
  justify-content: center;
  background: #b4b6bb;
  border: 1px solid #55575c;
`;

const SplitCaret = styled.button`
  display: flex;
  align-items: center;
  justify-content: center;
  width: 11px;
  background: #e6e8ec;
`;

const SelectTool = ({ narrow }: { narrow?: boolean }) => (
  <SplitSelect $narrow={narrow}>
    <SplitMain aria-label="选择">
      <Icon name="select" />
    </SplitMain>
    <SplitCaret aria-label="选择方式">
      <Triangle />
    </SplitCaret>
  </SplitSelect>
);

const Divider = styled.span`
  flex: none;
  width: 1px;
  height: 19px;
  margin: 0 3px;
  background: #7e8085;
`;

/* ---------- title bar ---------- */

const TitleBar = styled.header`
  display: flex;
  align-items: center;
  height: 29px;
  background: ${face};
  border-bottom: 1px solid #1a1b1e;
  box-shadow: inset 0 1px 0 #eceef1;
`;

const Brand = styled.div`
  display: flex;
  align-items: center;
  gap: 6px;
  width: 131px;
  height: 28px;
  padding-left: 4px;
  border-left: 5px solid #e02b20;
  background: linear-gradient(#3d454c, #1c2228);
  color: #fff;
  font: italic 14px/28px Lato, sans-serif;
`;

const BrandSvg = styled.svg`
  width: 20px;
  height: 22px;
`;

const BrandName = styled.span`
  b { font-weight: 900; }
`;

const BrandArrow = styled.button`
  display: flex;
  align-items: center;
  justify-content: center;
  width: 10px;
  height: 28px;
  background: #6e7074;
`;

const QuickAccess = styled.nav`
  display: flex;
  align-items: center;
  margin-left: 28px;
`;

const DocTitle = styled.h1`
  flex: 1;
  margin: 0;
  color: #3c3e42;
  font: inherit;
  text-align: center;
`;

const SearchBox = styled.label`
  display: flex;
  align-items: center;
  gap: 4px;
  width: 202px;
  height: 23px;
  padding: 0 0 0 5px;
  border: 1px solid #111;
  background: #eceef1;
`;

const SearchInput = styled.input`
  flex: 1;
  min-width: 0;
  padding: 0;
  border: 0;
  outline: 0;
  background: none;
  color: #5c5e66;
  font: 10px/16px "Open Sans", "Noto Sans CJK SC", sans-serif;
`;

const WindowButtons = styled.div<{ $right?: number }>`
  display: flex;
  align-items: center;
  height: 26px;
  margin-left: 3px;
  margin-right: ${(p) => p.$right ?? 0}px;
`;

const quick = ['newFile', 'open', 'save', 'print', 'undo', 'redo'];

const Title = () => (
  <TitleBar>
    <Brand>
      <BrandSvg viewBox="0 0 20 22" fill="none" stroke="#fff" strokeWidth="2" aria-hidden="true">
        <path d="M7 3l5-2q4 1 0 4l-5 3" />
        <path d="M5 9l5 0q2 3-2 7q-3 3-7 4l5-8" />
        <path d="M20 9q-6-1-7 1q0 2 3 4q2 4-6 5" />
      </BrandSvg>
      <BrandName>
        <b>SOLID</b>WORKS
      </BrandName>
    </Brand>
    <BrandArrow aria-label="菜单">
      <svg width="4" height="8" aria-hidden="true">
        <path d="M0 0l4 4l-4 4z" fill="#111" />
      </svg>
    </BrandArrow>
    <QuickAccess>
      {quick.map((n) => (
        <React.Fragment key={n}>
          <ToolButton $w={22} aria-label={n}>
            <Icon name={n} />
          </ToolButton>
          <Caret />
        </React.Fragment>
      ))}
      <SelectTool narrow />
      {['traffic', 'properties', 'options'].map((n) => (
        <ToolButton key={n} aria-label={n}>
          <Icon name={n} />
        </ToolButton>
      ))}
      <Caret />
    </QuickAccess>
    <DocTitle>长空一号 *</DocTitle>
    <SearchBox>
      <Icon name="console" />
      <SearchInput defaultValue="包覆" aria-label="搜索命令" />
      <Icon name="magnifier" />
      <Caret />
    </SearchBox>
    <WindowButtons>
      <ToolButton aria-label="help">
        <Icon name="help" />
      </ToolButton>
      <Caret />
      {['minimize', 'restore', 'close'].map((n) => (
        <ToolButton key={n} aria-label={n}>
          <Icon name={n} />
        </ToolButton>
      ))}
    </WindowButtons>
  </TitleBar>
);

/* ---------- toolbars ---------- */

const ToolbarRow = styled.div`
  display: flex;
  height: 31px;
  background: #d8dade;
  border-bottom: 1px solid #97999e;
  box-shadow: inset 0 1px 0 #f4f5f7;
`;

const BandBox = styled.div<{ $pad: number }>`
  display: flex;
  flex: none;
  align-items: center;
  padding-right: ${(p) => p.$pad}px;
  border-right: 1px solid #97999e;
  box-shadow: 1px 0 0 #f4f5f7;
  margin-right: 1px;
`;

const Grip = styled.span`
  flex: none;
  width: 2px;
  height: 20px;
  margin: 0 6px 0 4px;
  background: repeating-linear-gradient(#4a4c50 0 2px, transparent 2px 4px);
`;

const Chevrons = styled.button`
  width: 36px;
  color: #55575c;
  font-size: 16px;
`;

const Band = ({ items, pad = 9, more }: { items: string; pad?: number; more?: boolean }) => (
  <BandBox $pad={pad}>
    <Grip />
    {items.split(' ').map((n, i) => {
      if (n === '|') return <Divider key={i} />;
      if (n === 'v') return <Caret key={i} wide />;
      if (n === 'SELECT') return <SelectTool key={i} />;
      const pressed = n.startsWith('!');
      const name = pressed ? n.slice(1) : n;
      return (
        <ToolButton key={i} $pressed={pressed} aria-label={name} aria-pressed={pressed || undefined}>
          <Icon name={name} />
        </ToolButton>
      );
    })}
    {more && <Chevrons aria-label="更多">»</Chevrons>}
  </BandBox>
);

/* ---------- ribbon ---------- */

const RibbonBar = styled.div`
  display: flex;
  height: 77px;
  border-bottom: 1px solid #111;
  background: ${face};
  color: #1b1c1f;
`;

const RibbonGroup = styled.div<{ $left: number; $right: number }>`
  display: flex;
  flex: none;
  padding: 2px ${(p) => p.$right}px 0 ${(p) => p.$left}px;
`;

const RibbonRule = styled.span`
  width: 1px;
  height: 65px;
  margin-top: 4px;
  background: #5d5f64;
`;

const BigBox = styled.button<{ $w: number; $top: number; $on?: boolean }>`
  display: flex;
  flex: none;
  flex-direction: column;
  align-items: center;
  width: ${(p) => p.$w}px;
  height: 69px;
  padding-top: ${(p) => p.$top}px;
  line-height: 13px;
  color: #8a6000;
  ${(p) => p.$on && 'background: #b3b5ba; border: 2px solid #63656a; border-right-width: 1px;'}
`;

const BigText = styled.span`
  color: #1b1c1f;
  white-space: pre;
`;

const BigCaret = styled(Triangle)`
  margin-top: auto;
  margin-bottom: 2px;
`;

const Big = ({ icon, text, w, high, on }: { icon: string; text: string; w: number; high?: boolean; on?: boolean }) => (
  <BigBox $w={w} $top={high ? 5 : on ? 11 : 13} $on={on}>
    <Icon name={icon} />
    <BigText>{text}</BigText>
    {high && <BigCaret />}
  </BigBox>
);

const SmallColumn = styled.div<{ $left: number }>`
  display: flex;
  flex-direction: column;
  padding-left: ${(p) => p.$left}px;
`;

const SmallButton = styled.button`
  display: flex;
  align-items: center;
  gap: 7px;
  height: 23px;
  color: #8a6000;
  white-space: nowrap;
`;

const Smalls = ({ left, items }: { left: number; items: [string, string][] }) => (
  <SmallColumn $left={left}>
    {items.map(([icon, text]) => (
      <SmallButton key={text}>
        <Icon name={icon} />
        <BigText>{text}</BigText>
      </SmallButton>
    ))}
  </SmallColumn>
);

const Ribbon = () => (
  <RibbonBar>
    <RibbonGroup $left={6} $right={10}>
      <Big icon="boss" text={'拉伸凸\n台/基体'} w={50} />
      <Big icon="revolve" text={'旋转凸\n台/基体'} w={50} />
      <Smalls left={2} items={[['sweep', '扫描'], ['loft', '放样凸台/基体'], ['boundary', '边界凸台/基体']]} />
    </RibbonGroup>
    <RibbonRule />
    <RibbonGroup $left={2} $right={10}>
      <Big icon="cutExtrude" text={'拉伸切\n除'} w={46} />
      <Big icon="hole" text={'异型孔\n向导'} w={46} />
      <Big icon="cutRevolve" text={'旋转切\n除'} w={46} />
      <Smalls left={2} items={[['cutSweep', '扫描切除'], ['cutLoft', '放样切割'], ['cutBoundary', '边界切除']]} />
    </RibbonGroup>
    <RibbonRule />
    <RibbonGroup $left={0} $right={10}>
      <Big icon="fillet" text="圆角" w={38} high />
      <Big icon="pattern" text={'线性阵\n列'} w={42} high />
      <Smalls left={4} items={[['rib', '筋'], ['draft', '拔模'], ['shell', '抽壳']]} />
      <Smalls left={12} items={[['wrap', '包覆'], ['intersect', '相交'], ['mirror', '镜向']]} />
    </RibbonGroup>
    <RibbonRule />
    <RibbonGroup $left={1} $right={1}>
      <Big icon="refGeom" text={'参考几\n何体'} w={48} high />
      <Big icon="curve" text="曲线" w={32} high />
    </RibbonGroup>
    <RibbonRule />
    <RibbonGroup $left={2} $right={0}>
      <Big icon="instant3d" text="Instant3D" w={61} on />
      <Big icon="plane" text="基准面" w={50} />
    </RibbonGroup>
  </RibbonBar>
);

/* ---------- tab row with the view toolbar ---------- */

const TabRow = styled.div`
  position: relative;
  z-index: 1;
  display: flex;
  height: 20px;
  background: #fff;
`;

const Tab = styled.button<{ $w: number; $active?: boolean }>`
  width: ${(p) => p.$w}px;
  height: 19px;
  border: solid #17181b;
  border-width: 0 1px 2px 0;
  background: #a9abb0;
  line-height: 16px;
  ${(p) => p.$active && `background: ${face}; height: 20px; border-bottom-width: 1px; margin-top: -1px;`}
`;

const ViewBar = styled.div`
  display: flex;
  height: 26px;
  align-items: center;
`;

const Flexible = styled.span<{ $grow: number }>`
  flex: ${(p) => p.$grow} 1 0;
`;

const tabs: [string, number][] = [['特征', 56], ['草图', 57], ['钣金', 56], ['评估', 56], ['DimXpert', 66], ['办公室产品', 75]];
const viewTools = 'zoomFit zoomArea prevView sectionView viewOrient v displayStyle v glasses v appearance scene v viewSettings v normalTo';

const Tabs = () => (
  <TabRow>
    {tabs.map(([t, w], i) => (
      <Tab key={t} $w={w} $active={i === 0}>
        {t}
      </Tab>
    ))}
    <Flexible $grow={5} />
    <ViewBar>
      {viewTools.split(' ').map((n, i) =>
        n === 'v' ? (
          <Caret key={i} />
        ) : (
          <ToolButton key={i} aria-label={n}>
            <Icon name={n} />
          </ToolButton>
        ),
      )}
    </ViewBar>
    <Flexible $grow={6} />
    <WindowButtons $right={7}>
      {['paneLeft', 'paneRight', 'minimize', 'restore', 'close'].map((n) => (
        <ToolButton key={n} aria-label={n}>
          <Icon name={n} />
        </ToolButton>
      ))}
    </WindowButtons>
  </TabRow>
);

/* ---------- feature tree ---------- */

const Body = styled.main`
  display: flex;
  flex: 1;
  min-height: 0;
  background: #fff;
`;

const Panel = styled.aside`
  position: relative;
  display: flex;
  flex: none;
  flex-direction: column;
  width: 201px;
  padding-bottom: 2px;
  border-right: 2px solid #3a3c42;
  background: ${face};
`;

const PanelTop = styled.div`
  height: 5px;
  margin-top: 1px;
  border: solid #7a7fa6;
  border-width: 1px 0;
`;

const PanelTabs = styled.div`
  display: flex;
  height: 24px;
  align-items: flex-end;
  border-bottom: 1px solid #17181b;
`;

const PanelTab = styled.button<{ $active?: boolean }>`
  display: flex;
  align-items: center;
  justify-content: center;
  width: 28px;
  height: 21px;
  border: solid #17181b;
  border-width: 1px 1px 0 0;
  background: ${(p) => (p.$active ? '#e8eaee' : '#a9abb0')};
`;

const PanelMore = styled.button`
  align-self: center;
  margin-left: auto;
  padding: 0 4px;
  font-size: 16px;
`;

const FilterBox = styled.label`
  display: flex;
  align-items: center;
  height: 19px;
  margin: 1px 1px 3px 1px;
  padding-left: 5px;
  border: 1px solid #3a3c42;
  background: #efeff1;
`;

const TreeArea = styled.div`
  display: flex;
  flex: 1 1 470px;
  min-height: 0;
  background: #e1e4ea;
`;

const TreeList = styled.ul`
  flex: 1;
  height: 470px;
  overflow: hidden;
  color: #111;
`;

const TreeRow = styled.li`
  display: grid;
  grid-template-columns: 21px 16px 1fr;
  align-items: center;
  height: 18px;
  background: repeating-linear-gradient(#85878c 0 1px, transparent 1px 2px) 10px 0 / 1px 100% no-repeat;
`;

const TreeBranch = styled.span`
  display: flex;
  align-items: center;
  padding-left: 6px;
  &::after {
    content: '';
    flex: 1;
    margin-left: 1px;
    border-top: 1px dotted #85878c;
  }
`;

const Expander = styled.button`
  width: 9px;
  height: 9px;
  border: 1px solid #8f9298;
  border-radius: 1px;
  background:
    linear-gradient(#2c4a9c, #2c4a9c) center / 5px 1px no-repeat,
    linear-gradient(#2c4a9c, #2c4a9c) center / 1px 5px no-repeat,
    #fff;
`;

const LeafGap = styled.span`
  width: 5px;
`;

const TreeLabel = styled.span`
  padding-left: 5px;
  white-space: nowrap;
`;

const tree: [string, string, boolean][] = [
  ['boss', '机翼', true],
  ['revolve', '机身', true],
  ['sweep', '空速管', true],
  ['fillet', '圆角1', false],
  ['plane', '基准面2', false],
  ['revolve', '翼侧', true],
  ['mirror', '镜向3', false],
  ['plane', '副油箱基准', false],
  ['boss', '副油箱链接', true],
  ['mirror', '镜向4', false],
  ['plane', '基准面3', false],
  ['revolve', '副油箱', true],
  ['mirror', '镜向5', false],
  ['boss', '垂尾', true],
  ['boss', '平尾', true],
  ['revolve', '发动机', true],
  ['plane', '基准面4', false],
  ['sketchTree', '草图24', false],
  ['plane', '基准面5', false],
  ['boss', '发动机链接1', true],
  ['plane', '基准面6', false],
  ['boss', '发动机链接2', true],
  ['sketchTree', '(-) 草图37', false],
  ['cutExtrude', '切除-拉伸9', true],
  ['cutExtrude', '切除-拉伸7', true],
  ['boss', '发动机链接3', true],
  ['boss', '', false],
];

const VScroll = styled.div`
  display: flex;
  flex-direction: column;
  align-items: center;
  width: 13px;
  background: #efeff1;
`;

const ScrollArrow = styled.button`
  display: flex;
  align-items: center;
  justify-content: center;
  width: 13px;
  height: 17px;
`;

const Track = styled.span<{ $grow: number }>`
  flex: ${(p) => p.$grow} 1 0;
`;

const VThumb = styled.span`
  display: flex;
  flex: 194 1 0;
  align-items: center;
  justify-content: center;
  width: 12px;
  border: 1px solid #8f9196;
  border-radius: 1px;
  background: linear-gradient(90deg, #f2f2f4, #c6c7cb);
  &::after {
    content: '';
    width: 7px;
    height: 9px;
    background: repeating-linear-gradient(#55575c 0 1px, transparent 1px 3px);
  }
`;

const HScroll = styled.div`
  display: flex;
  align-items: center;
  height: 17px;
  margin: 1px 13px 1px 0;
  background: #efeff1;
`;

const HThumb = styled.span`
  display: flex;
  flex: 116 1 0;
  align-items: center;
  justify-content: center;
  height: 15px;
  border: 1px solid #8f9196;
  border-radius: 1px;
  background: linear-gradient(#f2f2f4, #c6c7cb);
  &::after {
    content: '';
    width: 9px;
    height: 7px;
    background: repeating-linear-gradient(90deg, #55575c 0 1px, transparent 1px 3px);
  }
`;

const Splitter = styled.button`
  position: absolute;
  top: 242px;
  right: -10px;
  display: flex;
  flex-direction: column;
  justify-content: space-around;
  align-items: center;
  width: 11px;
  height: 39px;
  padding: 4px 0;
  border: 1px solid #17181b;
  background: #e6e8ec;
`;

const Arrow = ({ d }: { d: string }) => (
  <svg width="7" height="7" viewBox="0 0 7 7" aria-hidden="true">
    <path d={d} fill="#33353a" />
  </svg>
);
const LEFT = 'M5 0v7l-4-3.500z';
const RIGHT = 'M2 0v7l4-3.500z';
const UP = 'M0 5h7l-3.500-4z';
const DOWN = 'M0 2h7l-3.500 4z';

const FeaturePanel = () => (
  <Panel>
    <PanelTop />
    <PanelTabs>
      {['treeTab', 'propTab', 'configTab', 'dimTab', 'displayTab'].map((n, i) => (
        <PanelTab key={n} $active={i === 0} aria-label={n}>
          <Icon name={n} />
        </PanelTab>
      ))}
      <PanelMore aria-label="更多">»</PanelMore>
    </PanelTabs>
    <FilterBox>
      <Icon name="funnel" />
      <SearchInput aria-label="过滤" />
    </FilterBox>
    <TreeArea>
      <TreeList>
        {tree.map(([icon, text, open], i) => (
          <TreeRow key={i}>
            <TreeBranch>{open ? <Expander aria-label="展开" /> : <LeafGap />}</TreeBranch>
            <Icon name={icon} />
            <TreeLabel>{text}</TreeLabel>
          </TreeRow>
        ))}
      </TreeList>
      <VScroll>
        <ScrollArrow aria-label="向上">
          <Arrow d={UP} />
        </ScrollArrow>
        <Track $grow={152} />
        <VThumb />
        <Track $grow={92} />
        <ScrollArrow aria-label="向下">
          <Arrow d={DOWN} />
        </ScrollArrow>
      </VScroll>
    </TreeArea>
    <HScroll>
      <ScrollArrow aria-label="向左">
        <Arrow d={LEFT} />
      </ScrollArrow>
      <Track $grow={4} />
      <HThumb />
      <Track $grow={36} />
      <ScrollArrow aria-label="向右">
        <Arrow d={RIGHT} />
      </ScrollArrow>
    </HScroll>
    <Splitter aria-label="折叠">
      <Arrow d={LEFT} />
      <Arrow d={LEFT} />
      <Arrow d={LEFT} />
    </Splitter>
  </Panel>
);

/* ---------- model view ---------- */

type Pt = [number, number];
type Stop = [number, string];

const hex = (c: string) => [1, 3, 5].map((i) => parseInt(c.slice(i, i + 2), 16));

const shade = (ramp: Stop[], t: number) => {
  let i = 0;
  while (i < ramp.length - 2 && t > ramp[i + 1][0]) i++;
  const [t0, c0] = ramp[i];
  const [t1, c1] = ramp[i + 1];
  const k = Math.min(1, Math.max(0, (t - t0) / (t1 - t0)));
  const a = hex(c0);
  const b = hex(c1);
  return `rgb(${a.map((v, j) => Math.round(v + (b[j] - v) * k)).join(',')})`;
};

/* smooth path through the points, Catmull-Rom converted to Béziers */
const spline = (p: Pt[]) => {
  let d = '';
  for (let i = 0; i < p.length - 1; i++) {
    const a = p[Math.max(0, i - 1)];
    const b = p[i];
    const c = p[i + 1];
    const e = p[Math.min(p.length - 1, i + 2)];
    const len = Math.hypot(c[0] - b[0], c[1] - b[1]);
    const k1 = Math.min(1, len / (Math.hypot(b[0] - a[0], b[1] - a[1]) || len)) / 6;
    const k2 = Math.min(1, len / (Math.hypot(e[0] - c[0], e[1] - c[1]) || len)) / 6;
    d += `C${b[0] + (c[0] - a[0]) * k1} ${b[1] + (c[1] - a[1]) * k1} ${c[0] - (e[0] - b[0]) * k2} ${c[1] - (e[1] - b[1]) * k2} ${c[0]} ${c[1]}`;
  }
  return d;
};

const closed = (top: Pt[], bottom: Pt[]) => {
  const back = [...bottom].reverse();
  return `M${top[0]}${spline(top)}L${back[0]}${spline(back)}z`;
};

/* a turned body: bands of tone between its upper and lower outline */
const Loft = ({ top, bottom, ramp, steps = 48 }: { top: Pt[]; bottom: Pt[]; ramp: Stop[]; steps?: number }) => (
  <g>
    {Array.from({ length: steps }, (_, i) => {
      const t = i / steps;
      const edge = top.map(([x, y], j): Pt => [x + (bottom[j][0] - x) * t, y + (bottom[j][1] - y) * t]);
      return <path key={i} d={closed(edge, bottom)} fill={shade(ramp, (i + 0.5) / steps)} />;
    })}
  </g>
);

const skin: Stop[] = [
  [0, '#fbcb8c'], [0.03, '#ffdc9c'], [0.14, '#ffe2a2'], [0.26, '#ffd69c'], [0.38, '#ffc792'], [0.5, '#d8a377'],
  [0.66, '#98714f'], [0.82, '#654a34'], [0.92, '#4e3629'], [1, '#482f25'],
];
const recess: Stop[] = [[0, '#60442f'], [0.15, '#604530'], [0.5, '#8b6547'], [0.8, '#b58660'], [1, '#d6a075']];
const tankSkin: Stop[] = [
  [0, '#f9cb90'], [0.06, '#ffdb9c'], [0.2, '#ffd59b'], [0.36, '#fcc291'], [0.54, '#c8956b'], [0.74, '#815d43'], [0.9, '#503729'], [1, '#452d24'],
];

const hullTop: Pt[] = [
  [226, 462], [277, 437], [310, 422], [339, 409], [417, 385], [546, 351], [663, 328], [783, 303], [900, 277],
  [1000, 257], [1067, 243], [1133, 229], [1180, 221], [1233, 215], [1277, 212], [1327, 211], [1366, 212],
];
const hullBottom: Pt[] = [
  [226, 462], [264, 466], [307, 467], [345, 466], [430, 460], [573, 433], [685, 410], [800, 386], [915, 362],
  [1015, 341], [1083, 327], [1145, 314], [1192, 303], [1243, 288], [1290, 271], [1335, 252], [1366, 239],
];
const podTop: Pt[] = [
  [565, 481], [583, 474], [603, 470], [650, 453], [717, 432], [783, 413], [883, 388], [1000, 362], [1075, 345], [1133, 333], [1150, 328],
];
const podBottom: Pt[] = [
  [578, 536], [598, 535], [620, 533], [667, 528], [740, 520], [805, 511], [905, 495], [1023, 472], [1097, 456], [1155, 443], [1172, 440],
];
const bayTop: Pt[] = [[580, 424], [603, 412], [650, 401], [717, 387], [783, 373], [883, 353], [1000, 329], [1075, 314], [1126, 307]];
const bayBottom: Pt[] = [[585, 480], [603, 474], [650, 457], [717, 436], [783, 416], [883, 391], [1000, 365], [1075, 348], [1139, 333]];
const tankATop: Pt[] = [[664, 364], [669, 354], [678, 346], [750, 332], [820, 317], [883, 303], [897, 303], [908, 308], [918, 317]];
const tankABottom: Pt[] = [[664, 364], [671, 371], [686, 376], [758, 363], [830, 348], [893, 333], [903, 329], [911, 324], [918, 317]];
const tankBTop: Pt[] = [[721, 400], [732, 385], [745, 375], [810, 362], [873, 348], [936, 335], [950, 336], [963, 343], [972, 349]];
const tankBBottom: Pt[] = [[721, 400], [733, 410], [752, 416], [822, 404], [883, 389], [943, 378], [956, 370], [966, 358], [972, 349]];

const ViewSvg = styled.svg`
  display: block;
  flex: 1;
  min-width: 0;
  width: 100%;
  height: 100%;
`;

const Viewport = styled.section`
  position: relative;
  display: flex;
  flex: 1;
  min-width: 0;
  border-right: 1px solid #55575c;
`;

const Model = () => (
  <ViewSvg viewBox="201 188 1164 544" role="img" aria-label="长空一号">
    <defs>
      <linearGradient id="finTop" gradientUnits="userSpaceOnUse" x1="420" y1="272" x2="424" y2="287">
        <stop offset="0" stopColor="#ffdc9c" />
        <stop offset=".5" stopColor="#ffd097" />
        <stop offset="1" stopColor="#dca678" />
      </linearGradient>
      <linearGradient id="rim" gradientUnits="userSpaceOnUse" x1="1150" y1="330" x2="1176" y2="438">
        <stop offset="0" stopColor="#fbc68e" />
        <stop offset=".3" stopColor="#a87a5c" />
        <stop offset=".7" stopColor="#7c5844" />
        <stop offset="1" stopColor="#51382c" />
      </linearGradient>
      <linearGradient id="mouth" gradientUnits="userSpaceOnUse" x1="1160" y1="340" x2="1176" y2="424">
        <stop offset="0" stopColor="#6a4a3a" />
        <stop offset=".5" stopColor="#b4845e" />
        <stop offset="1" stopColor="#f0b888" />
      </linearGradient>
      <linearGradient id="noseA" gradientUnits="userSpaceOnUse" x1="880" y1="0" x2="918" y2="0">
        <stop offset="0" stopColor="#7a4f40" stopOpacity="0" />
        <stop offset="1" stopColor="#7a4f40" stopOpacity=".7" />
      </linearGradient>
      <linearGradient id="noseB" gradientUnits="userSpaceOnUse" x1="925" y1="0" x2="972" y2="0">
        <stop offset="0" stopColor="#7a4f40" stopOpacity="0" />
        <stop offset="1" stopColor="#7a4f40" stopOpacity=".6" />
      </linearGradient>
    </defs>

    <path d="M319 306L340 410L430 395L546 353L528 263z" fill="#d39e71" />
    <path d="M319 306q6-8 18-13L500 259q20-3 24 0l4 4z" fill="url(#finTop)" />
    <path d="M319 306L528 262" stroke="#ff7a10" fill="none" />
    <path d="M528 263L546 351M319 307L340 409" stroke="#8a6040" fill="none" />
    <path d="M414 335Q480 312 516 313Q500 326 414 335z" fill="#d8a477" />
    <path d="M440 331Q480 325 498 314L514 314Q502 326 440 331z" fill="#4a3024" />
    <path d="M414 335Q480 311 516 313Q500 327 414 335z" fill="none" stroke="#ff7a10" />

    <Loft top={hullTop} bottom={hullBottom} ramp={skin} steps={64} />
    <path d="M340 408Q410 384 546 352" fill="none" stroke="#ff7a10" />
    <path d="M1126 308Q1165 303 1192 293L1190 296Q1160 306 1132 310z" fill="#6c4e38" />

    <Loft top={bayTop} bottom={bayBottom} ramp={recess} />
    <path d="M574 433q4-8 12-11q-6 22 2 58l-4-4z" fill="#a5795a" />
    <path d="M574 433q2-6 6-9q-3 26 6 54l-4-3z" fill="#5a3f2e" />
    <path d="M1126 308q9 4 11 8l2 17l-4 2z" fill="#9a6e55" />

    <Loft top={tankATop} bottom={tankABottom} ramp={tankSkin} steps={32} />
    <path d={closed(tankATop, tankABottom)} fill="url(#noseA)" />
    <path d="M912 318l6-1l-5 5z" fill="#452d24" />
    <path d="M810 351L873 338V349L812 363z" fill="#d39d72" />
    <path d="M810 351l3 11" stroke="#a87a58" strokeWidth="2" />
    <path d="M871 338l1 10" stroke="#a87a58" strokeWidth="3" />

    <Loft top={podTop} bottom={podBottom} ramp={skin} steps={64} />
    <path d="M585 475q8 5 18 8q-10-6-14-9z" fill="#c58f66" />
    <path d="M1148 329q8-2 13 8q14 34 18 80q2 20-9 23q-8-34-22-111z" fill="url(#rim)" />
    <path d="M1159 338q12 24 18 80q1 8-2 6q-14-24-16-86z" fill="url(#mouth)" />
    <path d="M1159 338q1 60 16 87" fill="none" stroke="#6b4a3a" strokeWidth="2" />

    <Loft top={tankBTop} bottom={tankBBottom} ramp={tankSkin} steps={32} />
    <path d={closed(tankBTop, tankBBottom)} fill="url(#noseB)" />

    <g strokeWidth="3" fill="none">
      <path d="M242 673L238 651" stroke="#1f6b2a" strokeWidth="4" />
      <path d="M242 672L238 651" stroke="#6fae78" strokeWidth="1" />
      <path d="M233 654l4-10l6 8z" fill="#1f6b2a" />
      <path d="M243 674L264 670" stroke="#2222b8" strokeWidth="4" />
      <path d="M243 674L264 670" stroke="#8a8aea" strokeWidth="1" />
      <path d="M262 665l9 4l-8 5z" fill="#1a1aa8" />
      <path d="M241 671l6 6M247 671l-6 6" stroke="#ee2020" strokeWidth="1" />
    </g>
    <g fontFamily="Liberation Serif, serif" fontSize="10">
      <text x="231" y="642" fill="#0b6a1c">Y</text>
      <text x="270" y="670" fill="#1414e0">Z</text>
    </g>
  </ViewSvg>
);

const Tooltip = styled.div`
  position: absolute;
  left: 316px;
  top: 167px;
  height: 22px;
  padding: 0 5px;
  border: 1px solid #767880;
  border-radius: 3px;
  background: linear-gradient(#fff, #e6e7f2);
  box-shadow: 3px 3px 2px rgba(60, 40, 20, 0.5);
  color: #505259;
  line-height: 20px;
`;

const TaskPane = styled.nav`
  position: absolute;
  top: 39px;
  right: -1px;
  border: solid #17181b;
  border-width: 1px 0 0 1px;
`;

const TaskTab = styled.button<{ $active?: boolean }>`
  display: flex;
  align-items: center;
  justify-content: center;
  width: 23px;
  height: 24px;
  border: solid #17181b;
  border-width: 0 0 2px 0;
  box-shadow: inset 1px 1px 0 #f0f1f3;
  background: ${(p) => (p.$active ? '#e3e5ea' : '#a9abb0')};
`;

const ImePanel = styled.div`
  position: absolute;
  right: 11px;
  bottom: 68px;
  width: 128px;
  height: 76px;
`;

/* seed hairs of the dandelion: angle, inner and outer radius */
const hairs = Array.from({ length: 90 }, (_, i) => {
  const a = i * 2.4;
  const r = 16 + ((i * 7) % 22);
  return { a, r0: r - 9, r, x: 97 + Math.cos(a) * r, y: 38 + Math.sin(a) * r };
});

const Ime = () => (
  <ImePanel>
    <svg width="128" height="76" viewBox="0 0 128 76" role="img" aria-label="输入法">
      <defs>
        <linearGradient id="imeTop" x1="0" x2="0" y1="0" y2="1">
          <stop offset="0" stopColor="#b9dc98" />
          <stop offset="1" stopColor="#93c568" />
        </linearGradient>
        <radialGradient id="puff" gradientUnits="userSpaceOnUse" cx="97" cy="36" r="44">
          <stop offset="0" stopColor="#b4cba6" />
          <stop offset=".4" stopColor="#d3e3c8" />
          <stop offset=".8" stopColor="#edf4e6" stopOpacity=".95" />
          <stop offset="1" stopColor="#a8d080" stopOpacity="0" />
        </radialGradient>
        <clipPath id="imeClip">
          <rect x="0" y="6" width="128" height="65" rx="7" />
        </clipPath>
      </defs>
      <rect x="2" y="10" width="124" height="64" rx="9" fill="#000" opacity=".12" />
      <rect x="6" y="1" width="119" height="75" rx="14" fill="#fff" stroke="#8cc45c" />
      <g clipPath="url(#imeClip)">
        <rect width="128" height="76" fill="#76b534" />
        <rect x="5" y="6" width="121" height="35" fill="url(#imeTop)" />
        <rect x="5" y="41" width="121" height="30" fill="#7db548" />
        <circle cx="97" cy="36" r="44" fill="url(#puff)" />
        <path d="M84 71q26-4 44-28v28z" fill="#4cb83c" opacity=".5" />
        {hairs.map((h, i) => (
          <g key={i} opacity=".75">
            <path
              d={`M${97 + Math.cos(h.a) * h.r0} ${38 + Math.sin(h.a) * h.r0}L${h.x} ${h.y}`}
              stroke={i % 3 ? '#fff' : '#98b888'}
            />
            <path
              d={`M${h.x + Math.cos(h.a + 1) * 4} ${h.y + Math.sin(h.a + 1) * 4}L${h.x} ${h.y}L${h.x + Math.cos(h.a - 1) * 4} ${h.y + Math.sin(h.a - 1) * 4}`}
              fill="none"
              stroke="#fff"
            />
          </g>
        ))}
        <g stroke="#4c3a52" strokeWidth="1.500">
          {Array.from({ length: 20 }, (_, i) => (
            <path key={i} d={`M97 38l${Math.cos(i * 0.95) * (7 + (i % 4) * 2)} ${Math.sin(i * 0.95) * (7 + (i % 4) * 2)}`} />
          ))}
        </g>
        <circle cx="97" cy="38" r="4" fill="#3f7a48" />
        <path d="M79 37l3 5M104 45l8 6" stroke="#333" strokeWidth="1.500" />
      </g>
      <path d="M5 8v62M125 8v62" stroke="#5da02c" />
      <g fill="#fff" fontFamily="Noto Sans CJK SC, sans-serif" fontSize="17">
        <text x="11" y="31">中</text>
        <text x="33" y="60">简</text>
      </g>
      <circle cx="42" cy="22" r="2" fill="none" stroke="#fff" strokeWidth="1.300" />
      <path d="M45 26q3 2-1 6" fill="none" stroke="#fff" strokeWidth="2" />
      <path d="M19 47q6 3 4 9t-7 5q-3 0-5-4q9 1 8-10z" fill="#fff" />
    </svg>
  </ImePanel>
);

const NetMeter = styled.div`
  position: absolute;
  right: 14px;
  bottom: 4px;
  display: flex;
  align-items: center;
  height: 49px;
`;

const NetPercent = styled.div`
  z-index: 1;
  width: 48px;
  height: 48px;
  margin-right: -26px;
  border: 3px solid #f0f1f1;
  border-radius: 50%;
  outline: 1px solid #b8babc;
  outline-offset: -1px;
  background: linear-gradient(#0d7a4c 0 44%, #4fcb62 44%);
  box-shadow: 0 2px 5px rgba(0, 0, 0, 0.35), inset 0 0 0 2px #16804f;
  color: #fff;
  font: 14px/42px "Liberation Sans", sans-serif;
  text-align: center;
`;

const NetRates = styled.ul`
  display: flex;
  flex-direction: column;
  justify-content: center;
  width: 85px;
  height: 40px;
  padding: 0 9px 0 31px;
  border: 1px solid #b0b2b4;
  border-radius: 20px;
  background: linear-gradient(#fbfbfb, #d9dadb);
  box-shadow: 0 2px 5px rgba(0, 0, 0, 0.25);
  color: #000;
  font-size: 10px;
  line-height: 15px;
`;

const NetRate = styled.li<{ $color: string }>`
  display: flex;
  align-items: center;
  justify-content: space-between;
  white-space: nowrap;
  svg { color: ${(p) => p.$color}; }
`;

const Net = () => (
  <NetMeter>
    <NetPercent>56%</NetPercent>
    <NetRates>
      <NetRate $color="#e0503c">
        <svg width="7" height="8" aria-hidden="true">
          <path d="M3.500 0l3.500 4h-2.500v4h-2v-4h-2.500z" fill="currentColor" />
        </svg>
        0K/s
      </NetRate>
      <NetRate $color="#219a52">
        <svg width="7" height="8" aria-hidden="true">
          <path d="M3.500 8l3.500-4h-2.500v-4h-2v4h-2.500z" fill="currentColor" />
        </svg>
        0K/s
      </NetRate>
    </NetRates>
  </NetMeter>
);

/* ---------- bottom ---------- */

const SheetRow = styled.div`
  display: flex;
  height: 16px;
  padding-left: 2px;
  border-top: 1px solid #111;
  background: #e1e4e9;
`;

const SheetNav = styled.button`
  display: flex;
  align-items: center;
  justify-content: center;
  width: 16px;
  height: 14px;
  border: 1px solid #c8cacf;
  background: #a9abb0;
`;

const SheetTab = styled.button<{ $w: number; $active?: boolean }>`
  width: ${(p) => p.$w}px;
  height: 14px;
  margin-left: 1px;
  border: solid #17181b;
  border-width: 0 1px 1px 1px;
  background: ${(p) => (p.$active ? '#e1e4e9' : '#a0a2a7')};
  line-height: 12px;
`;

const StatusBar = styled.footer`
  display: flex;
  align-items: center;
  height: 20px;
  padding: 0 6px 0 2px;
  border-top: 1px solid #17181b;
  border-bottom: 2px solid #8ba3bd;
  background: ${face};
`;

const StatusText = styled.span<{ $right?: number }>`
  margin-right: ${(p) => p.$right ?? 0}px;
`;

const StatusButton = styled.button<{ $right: number }>`
  margin-right: ${(p) => p.$right}px;
`;

const App = () => (
  <>
    <GlobalStyle />
    <Page>
      <Title />
      <ToolbarRow>
        <Band items="normalTo | front back left right top bottom isometric trimetric dimetric | telescope" />
        <Band items="gFront gBack gLeft gRight gTop gBottom gIso | sketch sketch3d sketchStep | copyBody copySketch" />
        <Band items="blocks blockYellow | SELECT | appearance" pad={7} />
        <Band items="spell measure mass section gauge trafficClock checkBlue checkRed sigma deviation warn thickness compareDocs verify v spreadsheet | simulation flow designCheck redBlue ring" />
      </ToolbarRow>
      <ToolbarRow>
        <Band items="plane axis coords point centerMass attach" pad={7} />
        <Band items="dot snapCenter snapMid snapQuad snapCross snapNear | snapTangent snapPerp snapParallel snapHV snapPoints snapLength snapGrid snapAngle" pad={7} />
        <Band items="surfExtrude surfRevolve surfSweep surfLoft surfBoundary surfFill surfPlanar surfOffset surfRuled surfRadiate deleteFace replaceFace knit | gExtend gTrim gUntrim fillet | refGeom v curve v" pad={9} />
        <Band items="gFilter gFilters filters SELECT cursors | !fVertex !fEdge !fFace !fSurface !fSolid !fAxis !fPlane" pad={0} more />
      </ToolbarRow>
      <Ribbon />
      <Tabs />
      <Body>
        <FeaturePanel />
        <Viewport>
          <Model />
          <Tooltip>垂尾</Tooltip>
          <TaskPane>
            {['forum', 'home', 'library', 'folder', 'palette', 'appearance', 'customProps'].map((n, i) => (
              <TaskTab key={n} $active={i === 0} aria-label={n}>
                <Icon name={n} />
              </TaskTab>
            ))}
          </TaskPane>
          <Ime />
          <Net />
        </Viewport>
      </Body>
      <SheetRow>
        {['first', 'prev', 'next', 'last'].map((n) => (
          <SheetNav key={n} aria-label={n}>
            <Icon name={n} />
          </SheetNav>
        ))}
        <SheetTab $w={45} $active>
          模型
        </SheetTab>
        <SheetTab $w={77}>运动算例 1</SheetTab>
      </SheetRow>
      <StatusBar>
        <StatusText>SolidWorks Premium 2014 x64 版</StatusText>
        <Flexible $grow={1} />
        <StatusText $right={51}>在编辑 零件</StatusText>
        <StatusText $right={16}>自定义</StatusText>
        <StatusButton $right={15} aria-label="单位">
          <Triangle $up />
        </StatusButton>
        <StatusButton $right={49} aria-label="statusHelp">
          <Icon name="statusHelp" />
        </StatusButton>
        <StatusButton $right={0} aria-label="tag">
          <Icon name="tag" />
        </StatusButton>
      </StatusBar>
    </Page>
  </>
);

export default App;
